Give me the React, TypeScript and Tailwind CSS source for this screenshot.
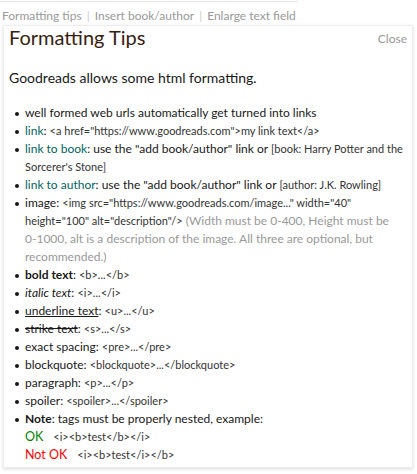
import React from 'react';

const Code: React.FC<{ children: React.ReactNode }> = ({ children }) => (
  <span className="text-[11px] text-[#333]">{children}</span>
);

const Link: React.FC<{ children: React.ReactNode }> = ({ children }) => (
  <span className="text-[#00635d]">{children}</span>
);

const Item: React.FC<{ children: React.ReactNode }> = ({ children }) => (
  <li className="flex">
    <span className="ml-[6px] mr-[6px] mt-[8px] w-[4px] h-[4px] shrink-0 rounded-full bg-[#181818]" />
    <div className="min-w-0 flex-1">{children}</div>
  </li>
);

const App: React.FC = () => {
  return (
    <div
      className="relative w-[417px] h-[474px] overflow-hidden bg-white text-[#333]"
      style={{ fontFamily: 'Lato, "Open Sans", sans-serif' }}
    >
      {/* page behind the popup */}
      <div className="w-[298px] h-[2px] border-b border-[#e5e5e5]" />
      <div className="flex items-center pl-[2px] pt-[6px] text-[12px] text-[#999] leading-[16px]">
        <span>Formatting tips</span>
        <span className="mx-[5px] text-[#ccc]">|</span>
        <span>Insert book/author</span>
        <span className="mx-[5px] text-[#ccc]">|</span>
        <span>Enlarge text field</span>
      </div>

      {/* popup */}
      <div className="absolute left-[3px] top-[25px] w-[410px] h-[443px] bg-white border border-[#eee] shadow-[0_1px_3px_rgba(0,0,0,0.15)] px-[5px]">
        <div className="flex items-start justify-between">
          <h2 className="text-[20px] leading-[22px] text-[#382110]">Formatting Tips</h2>
          <span className="mt-[4px] text-[12px] text-[#999]">Close</span>
        </div>
        <p className="mt-[21px] text-[14px] leading-[18px] text-[#181818]">
          Goodreads allows some html formatting.
        </p>
        <ul className="mt-[17px] text-[12px] leading-[18px] text-[#181818]">
          <Item>well formed web urls automatically get turned into links</Item>
          <Item>
            <Link>link</Link>: <Code>&lt;a href="https://www.goodreads.com"&gt;my link text&lt;/a&gt;</Code>
          </Item>
          <Item>
            <Link>link to book</Link>: use the "add book/author" link or{' '}
            <Code>[book: Harry Potter and the Sorcerer's Stone]</Code>
          </Item>
          <Item>
            <Link>link to author</Link>: use the "add book/author" link or <Code>[author: J.K. Rowling]</Code>
          </Item>
          <Item>
            image:{' '}
            <Code>
              &lt;img src="https://www.goodreads.com/image..." width="40" height="100" alt="description"/&gt;
            </Code>{' '}
            <span className="text-[#999]">
              (Width must be 0-400, Height must be <span className="whitespace-nowrap">0-1000,</span> alt is a
              description of the image. All three are optional, but recommended.)
            </span>
          </Item>
          <Item>
            <b>bold text</b>: <Code>&lt;b&gt;...&lt;/b&gt;</Code>
          </Item>
          <Item>
            <i>italic text</i>: <Code>&lt;i&gt;...&lt;/i&gt;</Code>
          </Item>
          <Item>
            <u>underline text</u>: <Code>&lt;u&gt;...&lt;/u&gt;</Code>
          </Item>
          <Item>
            <s>strike text</s>: <Code>&lt;s&gt;...&lt;/s&gt;</Code>
          </Item>
          <Item>
            exact spacing: <Code>&lt;pre&gt;...&lt;/pre&gt;</Code>
          </Item>
          <Item>
            blockquote: <Code>&lt;blockquote&gt;...&lt;/blockquote&gt;</Code>
          </Item>
          <Item>
            paragraph: <Code>&lt;p&gt;...&lt;/p&gt;</Code>
          </Item>
          <Item>
            spoiler: <Code>&lt;spoiler&gt;...&lt;/spoiler&gt;</Code>
          </Item>
          <Item>
            <b>Note</b>: tags must be properly nested, example:
            <div className="flex items-baseline h-[18px]">
              <span className="mr-[10px] text-[12.5px] leading-[18px] text-[#008000]">OK</span>
              <Code>&lt;i&gt;&lt;b&gt;test&lt;/b&gt;&lt;/i&gt;</Code>
            </div>
            <div className="flex items-baseline h-[18px]">
              <span className="mr-[10px] text-[12.5px] leading-[18px] text-[#ff0000]">Not OK</span>
              <Code>&lt;i&gt;&lt;b&gt;test&lt;/i&gt;&lt;/b&gt;</Code>
            </div>
          </Item>
        </ul>
      </div>
    </div>
  );
};

export default App;
